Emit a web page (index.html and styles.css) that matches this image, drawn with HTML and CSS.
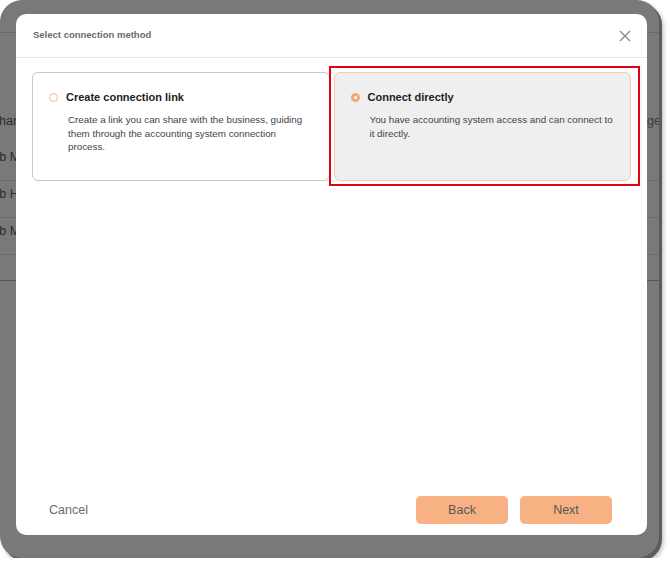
FILE: index.html
```html
<!DOCTYPE html>
<html lang="en">
<head>
  <meta charset="UTF-8">
  <title>Select connection method</title>
  <link rel="stylesheet" href="styles.css">
</head>
<body>
  <div class="frame">
    <!-- Page behind the dialog (dimmed) -->
    <div class="page">
      <div class="topbar"></div>
      <div class="table">
        <div class="row head">
          <span class="lead">Channel</span>
          <span class="tail">Stage</span>
        </div>
        <div class="row"><span class="name">Bob Martin</span></div>
        <div class="row"><span class="name">Bob Harris</span></div>
        <div class="row"><span class="name">Bob Moore</span></div>
      </div>
      <div class="table-end"></div>
    </div>

    <!-- Dialog -->
    <div class="modal">
      <div class="modal-header">
        <div class="modal-title">Select connection method</div>
        <button class="close-btn" title="Close">
          <svg width="12" height="12" viewBox="0 0 12 12">
            <path d="M1 1 L11 11 M11 1 L1 11" stroke="#8a8a8a" stroke-width="1.3" fill="none"/>
          </svg>
        </button>
      </div>

      <div class="modal-body">
        <div class="option">
          <div class="option-title">
            <span class="radio"></span>
            Create connection link
          </div>
          <div class="option-desc">Create a link you can share with the business, guiding them through the accounting system connection process.</div>
        </div>
        <div class="option selected">
          <div class="option-title">
            <span class="radio"></span>
            Connect directly
          </div>
          <div class="option-desc">You have accounting system access and can connect to it directly.</div>
        </div>
      </div>

      <div class="modal-footer">
        <button class="cancel-btn">Cancel</button>
        <div class="actions">
          <button class="btn">Back</button>
          <button class="btn">Next</button>
        </div>
      </div>
    </div>
  </div>
</body>
</html>
```

FILE: styles.css
```css
body {
  margin: 0;
  background: #fff;
  font-family: 'Liberation Sans', Arial, sans-serif;
}
.frame {
  position: relative;
  width: 659px;
  height: 558px;
  background: #7a7878;
  border-radius: 22px;
  overflow: hidden;
  box-shadow: 3px 3px 0 #5c5a5a, 4px 5px 5px rgba(0,0,0,0.3);
}
/* Dimmed page */
.page {
  color: #2b2b2b;
  font-size: 12.5px;
}
.topbar {
  height: 32px;
  border-bottom: 1px solid #6a6868;
}
.table {
  margin-top: 73px;
}
.row {
  height: 30px;
  border-bottom: 1px solid #6c6a6a;
  display: flex;
  justify-content: space-between;
  padding-top: 6px;
  box-sizing: content-box;
}
.row.head {
  height: 29px;
  padding-top: 8px;
  border-bottom-color: #7a7878;
}
.row .lead { margin-left: -10px; }
.row .tail { margin-right: -2px; color: #3c3c3c; }
.row .name { margin-left: -16px; }
.table-end {
  margin-top: 25px;
  border-top: 1px solid #585656;
}
/* Dialog */
.modal {
  position: absolute;
  top: 14px;
  left: 16px;
  width: 631px;
  height: 521px;
  background: #fff;
  border-radius: 10px;
  display: flex;
  flex-direction: column;
}
.modal-header {
  height: 43px;
  border-bottom: 1px solid #e7e7e7;
  display: flex;
  align-items: center;
  justify-content: space-between;
  padding: 0 15px 0 17px;
}
.modal-title {
  font-size: 9.5px;
  font-weight: bold;
  color: #6b6b6b;
  margin-top: -3px;
}
.close-btn {
  background: none;
  border: none;
  padding: 0;
  width: 14px;
  height: 14px;
  display: flex;
  align-items: center;
  justify-content: center;
  cursor: pointer;
}
.modal-body {
  flex: 1;
  display: flex;
  align-items: flex-start;
  gap: 4px;
  padding: 14px 16px 0 16px;
}
.option {
  position: relative;
  flex: 1;
  height: 109px;
  border: 1px solid #c9c9c9;
  border-radius: 6px;
  padding: 17px 14px 0 16px;
  box-sizing: border-box;
}
.option.selected {
  background: #efefef;
  border-color: #f9caa9;
}
.option.selected::after {
  content: '';
  position: absolute;
  top: -7px;
  left: -6px;
  right: -10px;
  bottom: -6px;
  border: 2px solid #e3000f;
}
.option-title {
  display: flex;
  align-items: center;
  gap: 8px;
  font-size: 11px;
  font-weight: bold;
  color: #222;
  line-height: 15px;
}
.radio {
  width: 9px;
  height: 9px;
  border: 1px solid #f6b690;
  border-radius: 50%;
  box-sizing: border-box;
  background: #fff;
}
.option.selected .radio {
  border: 3px solid #f5a475;
  background: #fff;
}
.option-desc {
  margin: 8px 0 0 19px;
  font-size: 9.8px;
  line-height: 13.5px;
  color: #444;
}
.modal-footer {
  display: flex;
  align-items: center;
  justify-content: space-between;
  padding: 0 35px 11px 33px;
}
.cancel-btn {
  background: none;
  border: none;
  padding: 0;
  font-family: inherit;
  font-size: 12.5px;
  color: #6b6b6b;
  cursor: pointer;
}
.actions {
  display: flex;
  gap: 12px;
}
.btn {
  width: 92px;
  height: 28px;
  background: #f8b183;
  border: none;
  border-radius: 5px;
  font-family: inherit;
  font-size: 12.5px;
  color: #585858;
  cursor: pointer;
}
```
